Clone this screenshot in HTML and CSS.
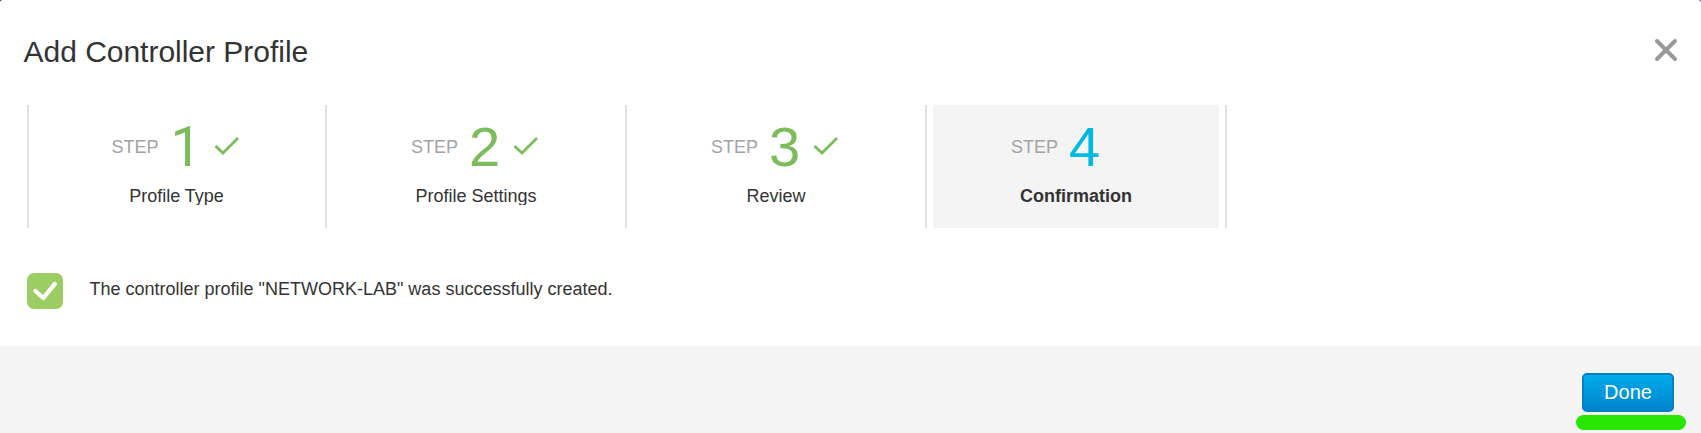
FILE: index.html
```html
<!DOCTYPE html>
<html lang="en">
<head>
<meta charset="utf-8">
<title>Add Controller Profile</title>
<link rel="stylesheet" href="styles.css">
</head>
<body>
<main class="dialog">
  <header class="dialog-header">
    <h1 class="title">Add Controller Profile</h1>
    <button class="close" aria-label="Close"><svg width="24" height="24" viewBox="0 0 24 24"><path d="M3 3L21 21M21 3L3 21"/></svg></button>
  </header>
  <ol class="steps">
    <li class="step step-first">
      <div class="step-head"><span class="word">STEP</span><span class="number number-one">1</span><svg class="tick" width="26" height="20" viewBox="0 0 26 20"><path d="M1.5 10L9 17L24 2"/></svg></div>
      <div class="label">Profile Type</div>
    </li>
    <li class="step">
      <div class="step-head"><span class="word">STEP</span><span class="number">2</span><svg class="tick" width="26" height="20" viewBox="0 0 26 20"><path d="M1.5 10L9 17L24 2"/></svg></div>
      <div class="label">Profile Settings</div>
    </li>
    <li class="step">
      <div class="step-head"><span class="word">STEP</span><span class="number">3</span><svg class="tick" width="26" height="20" viewBox="0 0 26 20"><path d="M1.5 10L9 17L24 2"/></svg></div>
      <div class="label">Review</div>
    </li>
    <li class="step step-current">
      <div class="step-head"><span class="word">STEP</span><span class="number">4</span></div>
      <div class="label">Confirmation</div>
    </li>
  </ol>
  <section class="result">
    <svg class="result-icon" width="36" height="36" viewBox="0 0 36 36"><rect width="36" height="36" rx="7"/><path d="M8.4 18L16.3 25L27.8 10.8"/></svg>
    <p class="message">The controller profile "NETWORK-LAB" was successfully created.</p>
  </section>
  <footer class="dialog-footer">
    <div class="action">
      <button class="done">Done</button>
      <span class="marker"></span>
    </div>
  </footer>
</main>
</body>
</html>
```
FILE: styles.css
```css
* { box-sizing: border-box; }
body {
  margin: 0;
  background: #4b5573;
  font-family: "Liberation Sans", Arial, sans-serif;
  font-size: 18px;
  color: #333;
}
.dialog {
  display: flex;
  flex-direction: column;
  height: 433px;
  background: #fff;
  border-radius: 3px 3px 0 0;
  overflow: hidden;
}
.dialog-header {
  display: flex;
  justify-content: space-between;
  align-items: flex-start;
  height: 105px;
  padding: 34px 23px 0 23.5px;
}
.title {
  margin: 0;
  font-size: 30px;
  font-weight: 400;
  line-height: 35px;
  letter-spacing: -0.02px;
}
.close {
  display: flex;
  margin-top: 4px;
  padding: 0;
  border: 0;
  background: none;
}
.close path {
  fill: none;
  stroke: #999;
  stroke-width: 4;
  stroke-linecap: round;
}
.steps {
  display: flex;
  height: 123px;
  margin: 0 0 0 27px;
  padding: 0;
  list-style: none;
}
.step {
  width: 300px;
  border-right: 2px solid #e2e2e2;
}
.step-first { border-left: 2px solid #e2e2e2; }
.step-current {
  padding: 0 6px;
  background: #f4f4f4 content-box;
}
.step-head {
  display: flex;
  align-items: flex-start;
  height: 73px;
  padding-left: 84px;
}
.step-first .step-head { padding-left: 82.5px; }
.step-current .step-head { padding-left: 78px; }
.word {
  margin: 31px 11px 0 0;
  line-height: 22px;
  color: #a3a3a3;
}
.number {
  width: 31px;
  margin: 15px 13px 0 0;
  font-size: 56px;
  line-height: 54px;
  color: #7cbc5a;
}
.number-one {
  padding-left: 1px;
  font-family: Roboto, "Liberation Sans", sans-serif;
  font-size: 55px;
}
.step-current .number { color: #00b9e4; }
.tick { margin-top: 31px; }
.tick path {
  fill: none;
  stroke: #7cbc5a;
  stroke-width: 2.7;
}
.label {
  height: 27px;
  padding-top: 7px;
  line-height: 22px;
  text-align: center;
  overflow: hidden;
}
.step-first .label { padding-right: 1px; }
.step-current .label { font-weight: 700; }
.result {
  display: flex;
  gap: 26.5px;
  height: 118px;
  padding: 45px 27px 0;
}
.result-icon rect { fill: #9bcd62; }
.result-icon path {
  fill: none;
  stroke: #fff;
  stroke-width: 4.3;
  stroke-linecap: round;
  stroke-linejoin: round;
}
.message {
  margin: 5px 0 0;
  line-height: 22px;
}
.dialog-footer {
  display: flex;
  justify-content: flex-end;
  flex: 1;
  padding: 27px 15px 0 0;
  background: #f4f4f4;
}
.action {
  display: flex;
  flex-direction: column;
  gap: 3px;
  width: 111px;
}
.done {
  width: 92px;
  height: 39px;
  margin-left: 7px;
  padding: 0;
  border: 2px solid #0080c7;
  border-radius: 5px;
  background: linear-gradient(#00abec, #0084cb);
  color: #fff;
  font-family: inherit;
  font-size: 20px;
}
.marker {
  width: 110px;
  height: 15px;
  margin-left: 0.5px;
  border-radius: 8px;
  background: #28e600;
}
```
